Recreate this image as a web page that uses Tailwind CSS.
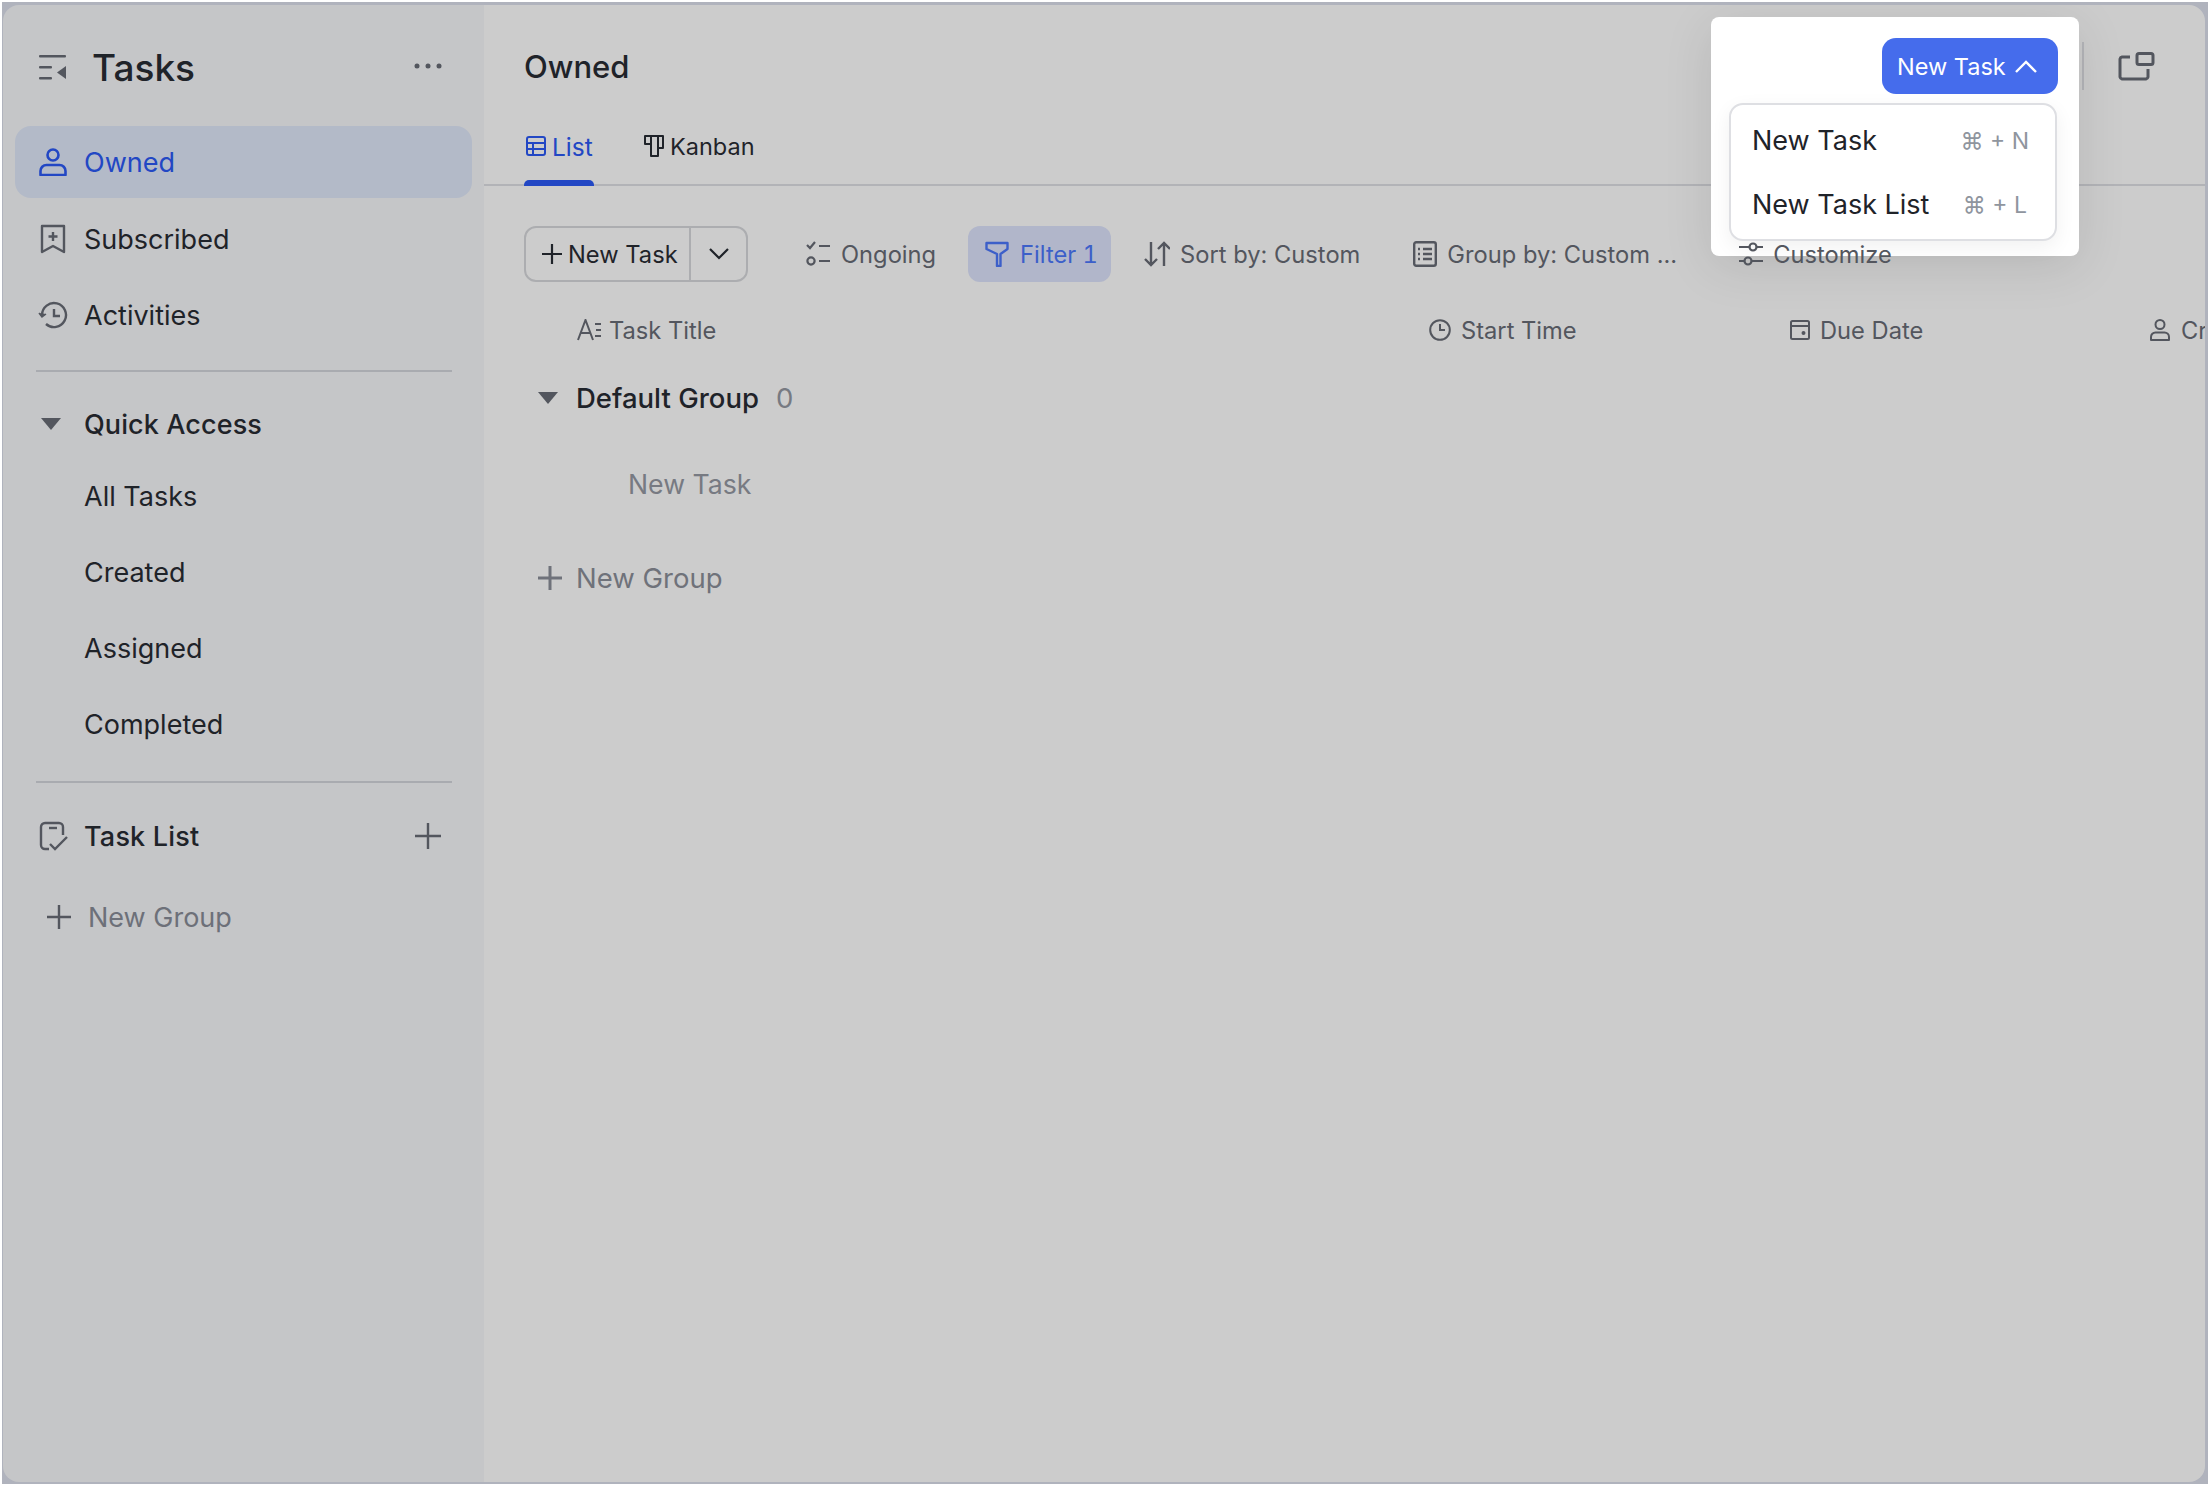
<!DOCTYPE html>
<html lang="en">
<head>
<meta charset="UTF-8">
<title>Tasks</title>
<script src="https://cdn.jsdelivr.net/npm/@tailwindcss/browser@4"></script>
</head>
<body class="h-screen bg-white overflow-hidden font-['Inter',sans-serif]">
<div class="h-full p-[2px]">
<div class="h-full bg-[#b0b3bd] pt-[3px] pl-[1px] pr-[3px] pb-[2px]">
<div class="relative h-full flex rounded-[16px] overflow-hidden text-[#1f2329]">

  <!-- sidebar -->
  <aside class="w-[481px] shrink-0 bg-[#c5c6c8] flex flex-col">
    <div class="h-[121px] flex items-center pl-[36px] pr-[42px] pt-[3px]">
      <svg class="w-[27px] h-[25px] text-[#53565e]" viewBox="0 0 27 25" fill="currentColor"><rect x="0" y="0" width="27" height="2.600" rx="1"/><rect x="0" y="11" width="13" height="2.600" rx="1"/><rect x="0" y="22" width="13" height="2.600" rx="1"/><path d="M27 11v13l-9-6.500z"/></svg>
      <span class="ml-[26px] text-[37px] leading-none font-medium">Tasks</span>
      <svg class="ml-auto w-[28px] h-[6px] text-[#53565e] -mt-[3px]" viewBox="0 0 28 6" fill="currentColor"><circle cx="3" cy="3" r="2.500"/><circle cx="14" cy="3" r="2.500"/><circle cx="25" cy="3" r="2.500"/></svg>
    </div>
    <nav class="px-[12px] text-[27px]">
      <a class="h-[72px] w-[457px] rounded-[16px] bg-[#b3bac8] flex items-center pl-[24px] text-[#2247c4]">
        <svg class="w-[28px] h-[28px]" viewBox="0 0 28 28" fill="none" stroke="currentColor" stroke-width="2.600"><circle cx="14" cy="7" r="5.500"/><path d="M1.500 27v-4a6 6 0 0 1 6-6h13a6 6 0 0 1 6 6v4z" stroke-linejoin="round"/></svg>
        <span class="ml-[17px] pt-[2px]">Owned</span>
      </a>
      <a class="mt-[3px] h-[76px] flex items-center pl-[24px]">
        <svg class="w-[28px] h-[30px] text-[#53565e]" viewBox="0 0 28 30" fill="none" stroke="currentColor" stroke-width="2.400"><path d="M3 2h22v26l-11-6-11 6z" stroke-linejoin="round"/><path d="M14 8v9M9.500 12.500h9"/></svg>
        <span class="ml-[17px] pt-[2px]">Subscribed</span>
      </a>
      <a class="h-[76px] flex items-center pl-[24px]">
        <svg class="w-[30px] h-[28px] text-[#53565e] -ml-[1px]" viewBox="0 0 30 28" fill="none" stroke="currentColor" stroke-width="2.400"><path d="M4 14a12 12 0 1 1 4 9"/><path d="M1 12l3 4 4-3" fill="currentColor" stroke-width="1.500"/><path d="M16 8v7h6"/></svg>
        <span class="ml-[16px] pt-[2px]">Activities</span>
      </a>
    </nav>
    <div class="ml-[33px] w-[416px] mt-[17px] h-[2px] bg-[#a9abb0]"></div>
    <div class="px-[12px] text-[27px]">
      <div class="h-[72px] mt-[16px] flex items-center pl-[26px] font-medium">
        <svg class="w-[20px] h-[12px] text-[#53565e]" viewBox="0 0 20 12" fill="currentColor"><path d="M0 0h20L10 12z"/></svg>
        <span class="ml-[23px] pt-[2px] tracking-[0.1px]">Quick Access</span>
      </div>
      <a class="block h-[76px] leading-[78px] pl-[69px] -mt-[2px]">All Tasks</a>
      <a class="block h-[76px] leading-[78px] pl-[69px]">Created</a>
      <a class="block h-[76px] leading-[78px] pl-[69px]">Assigned</a>
      <a class="block h-[76px] leading-[78px] pl-[69px]">Completed</a>
    </div>
    <div class="ml-[33px] w-[416px] mt-[19px] h-[2px] bg-[#a9abb0]"></div>
    <div class="px-[12px] text-[27px]">
      <div class="h-[72px] mt-[17px] flex items-center pl-[24px] pr-[30px] font-medium">
        <svg class="w-[30px] h-[30px] text-[#53565e]" viewBox="0 0 30 30" fill="none" stroke="currentColor" stroke-width="2.400"><path d="M10 28H6a4 4 0 0 1-4-4V6a4 4 0 0 1 4-4h14a4 4 0 0 1 4 4v8"/><path d="M10 7h8"/><path d="M11 23l5 5 12-12"/></svg>
        <span class="ml-[15px] pt-[2px] tracking-[0.2px]">Task List</span>
        <svg class="ml-auto w-[28px] h-[28px] text-[#53565e]" viewBox="0 0 28 28" fill="none" stroke="currentColor" stroke-width="2.400"><path d="M14 1v26M1 14h26"/></svg>
      </div>
      <div class="h-[72px] mt-[9px] flex items-center pl-[31px] text-[#6d7079]">
        <svg class="w-[26px] h-[26px] text-[#53565e]" viewBox="0 0 26 26" fill="none" stroke="currentColor" stroke-width="2.400"><path d="M13 1v24M1 13h24"/></svg>
        <span class="ml-[16px] pt-[2px]">New Group</span>
      </div>
    </div>
  </aside>

  <!-- main -->
  <main class="flex-1 min-w-0 bg-[#cccccc] flex flex-col overflow-hidden">
    <header class="h-[122px] flex items-center pl-[40px] pr-[50px] pt-[2px]">
      <h1 class="text-[31px] font-medium">Owned</h1>
      <div class="ml-auto w-[2px] h-[48px] bg-[#b3b4b8] mr-[34px] -mt-[2px]"></div>
      <svg class="w-[37px] h-[29px] text-[#53565e] -mt-[2px]" viewBox="0 0 37 29" fill="none" stroke="currentColor" stroke-width="3"><path d="M12 5H4a2.500 2.500 0 0 0-2 2v18a2.500 2.500 0 0 0 2 2h24a2.500 2.500 0 0 0 2-2V17" stroke-linejoin="round"/><rect x="19" y="1.500" width="16" height="11" rx="2"/></svg>
    </header>

    <div class="h-[60px] -mt-[1px] flex border-b-[2px] border-[#b2b3b7] pl-[40px] text-[24px]">
      <a class="relative h-[60px] w-[70px] shrink-0 flex items-center gap-[6px] pb-[20px] text-[#2247c4]">
        <svg class="w-[20px] h-[20px] ml-[2px] shrink-0" viewBox="0 0 20 20" fill="none" stroke="currentColor" stroke-width="2"><rect x="1" y="1" width="18" height="18" rx="2"/><path d="M1 7h18M1 13h18M7 7v12"/></svg>
        <span class="pt-[2px] text-[24.500px]">List</span>
        <span class="absolute left-0 bottom-0 w-full h-[6px] rounded-t-[5px] bg-[#2247c4]"></span>
      </a>
      <a class="ml-[50px] h-[58px] flex items-center gap-[6px] pb-[18px]">
        <svg class="w-[20px] h-[22px]" viewBox="0 0 20 22" fill="none" stroke="currentColor" stroke-width="2"><path d="M1 1h18v12h-5v8H7v-12H1zM7 1v8M14 1v12" stroke-linejoin="round"/></svg>
        <span class="pt-[2px] text-[23.500px]">Kanban</span>
      </a>
    </div>

    <div class="mt-[40px] pl-[40px] h-[56px] flex items-center text-[23.700px] text-[#53565e]">
      <div class="h-[56px] w-[224px] border-[2px] border-[#acadb0] rounded-[12px] flex items-center text-[#1f2329]">
        <div class="w-[165px] h-full flex items-center border-r-[2px] border-[#acadb0] pl-[16px]">
          <svg class="w-[20px] h-[20px]" viewBox="0 0 20 20" fill="none" stroke="currentColor" stroke-width="2.200"><path d="M10 0v20M0 10h20"/></svg>
          <span class="ml-[6px] pt-[2px]">New Task</span>
        </div>
        <svg class="ml-[18px] w-[20px] h-[12px]" viewBox="0 0 20 12" fill="none" stroke="currentColor" stroke-width="2.200"><path d="M1 1l9 9 9-9"/></svg>
      </div>
      <div class="ml-[58px] flex items-center">
        <svg class="w-[24px] h-[26px]" viewBox="0 0 24 26" fill="none" stroke="currentColor" stroke-width="2.200"><path d="M1 4l3 3 5-6M13 5h11M13 20h11"/><circle cx="5" cy="20" r="3.600"/></svg>
        <span class="ml-[11px] pt-[2px]">Ongoing</span>
      </div>
      <div class="ml-[32px] h-[56px] w-[143px] rounded-[12px] bg-[#b1b6ca] flex items-center pl-[17px] text-[#3c5fc9]">
        <svg class="w-[24px] h-[26px]" viewBox="0 0 24 26" fill="none" stroke="currentColor" stroke-width="2.400"><path d="M1.500 2h21v6l-7 5v12h-3.500V13L1.500 8z" stroke-linejoin="round"/></svg>
        <span class="ml-[11px] pt-[2px] tabular-nums">Filter 1</span>
      </div>
      <div class="ml-[33px] flex items-center">
        <svg class="w-[26px] h-[26px]" viewBox="0 0 26 26" fill="none" stroke="currentColor" stroke-width="2.400"><path d="M7 1v23M1 18l6 6 6-6M20 25V2M14 8l6-6 6 6"/></svg>
        <span class="ml-[10px] pt-[2px]">Sort by: Custom</span>
      </div>
      <div class="ml-[53px] flex items-center">
        <svg class="w-[24px] h-[26px]" viewBox="0 0 24 26" fill="none" stroke="currentColor" stroke-width="2.400"><rect x="1.200" y="1.200" width="21.600" height="23.600" rx="2"/><path d="M10 8h9M10 13h9M10 18h9M5 8h2M5 13h2M5 18h2"/></svg>
        <span class="ml-[10px] pt-[2px]">Group by: Custom ...</span>
      </div>
      <div class="relative z-10 ml-[62px] flex items-center">
        <svg class="w-[24px] h-[24px]" viewBox="0 0 24 24" fill="none" stroke="currentColor" stroke-width="2.200"><circle cx="14" cy="5" r="3.500"/><circle cx="9" cy="19" r="3.500"/><path d="M0 5h10.500M17.500 5H24M0 19h5.500M12.500 19H24"/></svg>
        <span class="ml-[10px] pt-[2px]">Customize</span>
      </div>
    </div>

    <div class="mt-[32px] pl-[93px] h-[32px] flex items-center text-[23.700px] text-[#53565e] whitespace-nowrap">
      <div class="w-[852px] shrink-0 flex items-center">
        <svg class="w-[24px] h-[22px]" viewBox="0 0 24 22" fill="none" stroke="currentColor" stroke-width="2"><path d="M1 21L8.500 1l7.500 20M4 14h9M18 5h6M19 11h5M18 17h6"/></svg>
        <span class="ml-[8px] pt-[2px]">Task Title</span>
      </div>
      <div class="w-[361px] shrink-0 flex items-center">
        <svg class="w-[22px] h-[22px]" viewBox="0 0 22 22" fill="none" stroke="currentColor" stroke-width="2"><circle cx="11" cy="11" r="9.800"/><path d="M11 5v6h5"/></svg>
        <span class="ml-[10px] pt-[2px]">Start Time</span>
      </div>
      <div class="w-[360px] shrink-0 flex items-center">
        <svg class="w-[20px] h-[20px]" viewBox="0 0 20 20" fill="none" stroke="currentColor" stroke-width="2"><rect x="1" y="1" width="18" height="18" rx="1.500"/><path d="M1 6h18"/><circle cx="13.500" cy="13" r="1" fill="currentColor"/></svg>
        <span class="ml-[10px] pt-[2px]">Due Date</span>
      </div>
      <div class="shrink-0 flex items-center">
        <svg class="w-[20px] h-[22px]" viewBox="0 0 20 22" fill="none" stroke="currentColor" stroke-width="2"><circle cx="10" cy="5.500" r="4.500"/><path d="M1 21v-3a4.500 4.500 0 0 1 4.500-4.500h9A4.500 4.500 0 0 1 19 18v3z" stroke-linejoin="round"/></svg>
        <span class="ml-[11px] pt-[2px]">Creator</span>
      </div>
    </div>

    <div class="mt-[32px] pl-[54px] h-[40px] flex items-center text-[27.500px]">
      <svg class="w-[20px] h-[12px] text-[#53565e]" viewBox="0 0 20 12" fill="currentColor"><path d="M0 0h20L10 12z"/></svg>
      <span class="ml-[18px] pt-[2px] font-medium">Default Group</span>
      <span class="ml-[17px] pt-[2px] text-[#777a82]">0</span>
    </div>
    <div class="mt-[45px] pl-[144px] h-[40px] flex items-center text-[26.700px] text-[#777a82]"><span class="pt-[2px]">New Task</span></div>
    <div class="mt-[55px] pl-[54px] h-[40px] flex items-center text-[27.500px] text-[#6f727a]">
      <svg class="w-[24px] h-[24px]" viewBox="0 0 24 24" fill="none" stroke="currentColor" stroke-width="3"><path d="M12 0v24M0 12h24"/></svg>
      <span class="ml-[14px] pt-[2px]">New Group</span>
    </div>
  </main>

  <!-- popup lit up over the dimmed page -->
  <div class="absolute left-[1708px] top-[12px] w-[368px] h-[239px] bg-white rounded-[8px] shadow-[0_10px_50px_rgba(0,0,0,0.10)]">
    <button class="absolute left-[171px] top-[21px] w-[176px] h-[56px] rounded-[14px] bg-[#456cec] text-white text-[23.500px] flex items-center pl-[15px] gap-[9px]">
      <span class="pt-[2px]">New Task</span>
      <svg class="w-[22px] h-[13px]" viewBox="0 0 22 13" fill="none" stroke="currentColor" stroke-width="2.400"><path d="M1 12l10-10 10 10"/></svg>
    </button>
    <div class="absolute left-[18px] top-[86px] w-[328px] h-[138px] bg-white border-[2px] border-[#dedfe3] rounded-[14px] shadow-[0_6px_20px_rgba(0,0,0,0.06)] py-[4px]">
      <div class="h-[64px] flex items-center pl-[21px] pr-[26px] text-[27px]">
        <span>New Task</span>
        <span class="ml-auto text-[23px] text-[#8f959e]">⌘ + N</span>
      </div>
      <div class="h-[64px] flex items-center pl-[21px] pr-[26px] text-[27px]">
        <span>New Task List</span>
        <span class="ml-auto text-[23px] text-[#8f959e] pr-[2px]">⌘ + L</span>
      </div>
    </div>
  </div>

</div>
</div>
</div>
</body>
</html>
